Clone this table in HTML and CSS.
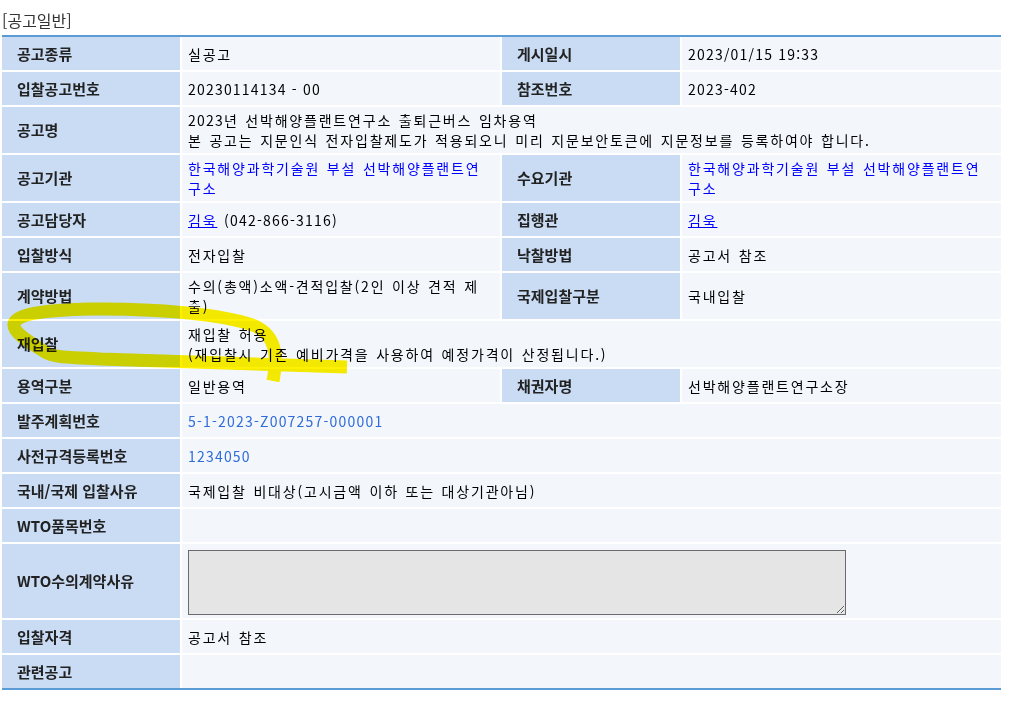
FILE: index.html
```html
<!DOCTYPE html>
<html lang="ko">
<head>
<meta charset="utf-8">
<title>공고일반</title>
<link rel="stylesheet" href="styles.css">
</head>
<body>
<div class="page">
  <h2 class="section-title">[공고일반]</h2>
  <div class="info">
    <div class="lbl">공고종류</div>
    <div class="val"><span>실공고</span></div>
    <div class="lbl">게시일시</div>
    <div class="val"><span class="num">2023/01/15 19:33</span></div>

    <div class="lbl">입찰공고번호</div>
    <div class="val"><span class="num">20230114134 - 00</span></div>
    <div class="lbl">참조번호</div>
    <div class="val"><span class="num">2023-402</span></div>

    <div class="lbl">공고명</div>
    <div class="val wide"><span><span class="num">2023</span>년 선박해양플랜트연구소 출퇴근버스 임차용역<br>본 공고는 지문인식 전자입찰제도가 적용되오니 미리 지문보안토큰에 지문정보를 등록하여야 합니다.</span></div>

    <div class="lbl">공고기관</div>
    <div class="val"><span><a class="org" href="#">한국해양과학기술원 부설 선박해양플랜트연<br>구소</a></span></div>
    <div class="lbl">수요기관</div>
    <div class="val"><span><a class="org" href="#">한국해양과학기술원 부설 선박해양플랜트연<br>구소</a></span></div>

    <div class="lbl">공고담당자</div>
    <div class="val"><span><a class="person" href="#">김욱</a> <span class="num">(042-866-3116)</span></span></div>
    <div class="lbl">집행관</div>
    <div class="val"><span><a class="person" href="#">김욱</a></span></div>

    <div class="lbl">입찰방식</div>
    <div class="val"><span>전자입찰</span></div>
    <div class="lbl">낙찰방법</div>
    <div class="val"><span>공고서 참조</span></div>

    <div class="lbl">계약방법</div>
    <div class="val"><span>수의(총액)소액-견적입찰(2인 이상 견적 제<br>출)</span></div>
    <div class="lbl">국제입찰구분</div>
    <div class="val"><span>국내입찰</span></div>

    <div class="lbl">재입찰</div>
    <div class="val wide"><span>재입찰 허용<br>(재입찰시 기존 예비가격을 사용하여 예정가격이 산정됩니다.)</span></div>

    <div class="lbl">용역구분</div>
    <div class="val"><span>일반용역</span></div>
    <div class="lbl">채권자명</div>
    <div class="val"><span>선박해양플랜트연구소장</span></div>

    <div class="lbl">발주계획번호</div>
    <div class="val wide"><span class="num code">5-1-2023-Z007257-000001</span></div>

    <div class="lbl">사전규격등록번호</div>
    <div class="val wide"><span class="num code">1234050</span></div>

    <div class="lbl">국내/국제 입찰사유</div>
    <div class="val wide"><span>국제입찰 비대상(고시금액 이하 또는 대상기관아님)</span></div>

    <div class="lbl">WTO품목번호</div>
    <div class="val wide"></div>

    <div class="lbl">WTO수의계약사유</div>
    <div class="val wide area-cell"><textarea class="reason" readonly></textarea></div>

    <div class="lbl">입찰자격</div>
    <div class="val wide"><span>공고서 참조</span></div>

    <div class="lbl">관련공고</div>
    <div class="val wide"></div>
  </div>
  <svg class="marker" width="1013" height="702" viewBox="0 0 1013 702" aria-hidden="true">
    <path d="M273,381 C278,355 276,336 255,326 C225,314 150,308 90,309 C45,310 15,314 14,324 C13,334 35,345 45,352 C55,358 70,357 100,359 L347,367" fill="none" stroke="#fff000" stroke-width="13" stroke-linecap="butt" stroke-linejoin="round"/>
  </svg>
</div>
</body>
</html>
```

FILE: styles.css
```css
html, body {
  margin: 0;
  padding: 0;
  background: #ffffff;
}

.page {
  position: relative;
  padding: 0 0 0 2px;
  font-family: "Noto Sans CJK KR", "Noto Sans", sans-serif;
}

.section-title {
  margin: 0 0 4px 0;
  padding-top: 10px;
  font-size: 16px;
  line-height: 21px;
  font-weight: 400;
  color: #333333;
}

.info {
  display: grid;
  grid-template-columns: 178px 318px 178px 1fr;
  gap: 2px;
  width: 999px;
  border-top: 2px solid #5b9bd5;
  border-bottom: 2px solid #5b9bd5;
  background: #ffffff;
}

.lbl {
  display: flex;
  align-items: center;
  min-height: 33px;
  box-sizing: border-box;
  padding: 3px 5px 3px 15px;
  background: #c9dcf4;
  font-size: 15px;
  line-height: 20px;
  font-weight: 700;
  color: #222222;
}

.val {
  display: flex;
  align-items: center;
  min-height: 33px;
  box-sizing: border-box;
  padding: 3px 5px 3px 6px;
  background: #f3f7fc;
  font-size: 14px;
  line-height: 20px;
  letter-spacing: 1.8px;
  word-spacing: 1px;
  color: #000000;
}

.num {
  letter-spacing: 1.2px;
  word-spacing: 0;
}

.wide {
  grid-column: span 3;
}

.org {
  color: #0000ff;
  text-decoration: none;
}

.person {
  color: #0000ff;
  text-decoration: underline;
}

.code {
  color: #2f6bd8;
}

.area-cell {
  align-items: flex-start;
  padding-top: 6px;
  padding-bottom: 3px;
}

.reason {
  display: block;
  width: 658px;
  height: 65px;
  box-sizing: border-box;
  margin: 0;
  border: 1px solid #6b6b6b;
  background: #e5e5e5;
  resize: both;
}

.marker {
  position: absolute;
  left: 0;
  top: 0;
  pointer-events: none;
  mix-blend-mode: multiply;
}
```
